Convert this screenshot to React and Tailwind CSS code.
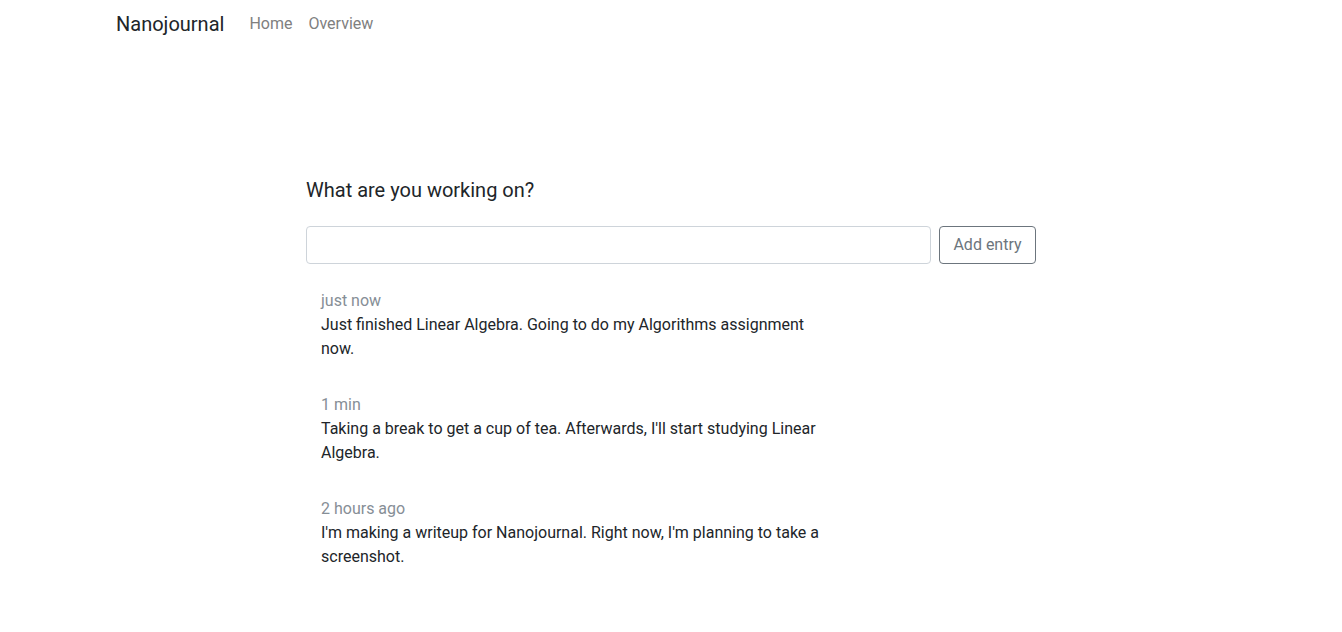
const entries = [
  { time: "just now", text: "Just finished Linear Algebra. Going to do my Algorithms assignment now." },
  { time: "1 min", text: "Taking a break to get a cup of tea. Afterwards, I'll start studying Linear Algebra." },
  { time: "2 hours ago", text: "I'm making a writeup for Nanojournal. Right now, I'm planning to take a screenshot." },
];

export default function App() {
  return (
    <div className="min-h-[632px] bg-white text-[#212529] text-[16px] leading-6" style={{ fontFamily: "Roboto, 'Liberation Sans', sans-serif" }}>
      <nav className="mx-auto max-w-[1140px] px-[15px] pt-[9px] flex items-center">
        <a className="text-[20px] leading-[30px] mr-[17px] text-[#212529]">Nanojournal</a>
        <div className="flex">
          <a className="px-2 leading-6 text-[#808080]">Home</a>
          <a className="px-2 leading-6 text-[#808080]">Overview</a>
        </div>
      </nav>
      <main className="mx-auto w-[730px] pt-[139px]">
        <h5 className="text-[20px] leading-6 font-normal">What are you working on?</h5>
        <div className="mt-6 flex gap-2">
          <input className="flex-1 h-[38px] border border-[#ced4da] rounded-[4px] px-3 outline-none" />
          <button className="h-[38px] w-[97px] border border-[#6c757d] rounded-[4px] text-[#6c757d] bg-white">Add entry</button>
        </div>
        <div className="mt-[25px] pl-[15px] flex flex-col gap-8">
          {entries.map((e) => (
            <div key={e.time} className="w-[516px]">
              <div className="text-[#868e96]">{e.time}</div>
              <div>{e.text}</div>
            </div>
          ))}
        </div>
      </main>
    </div>
  );
}
